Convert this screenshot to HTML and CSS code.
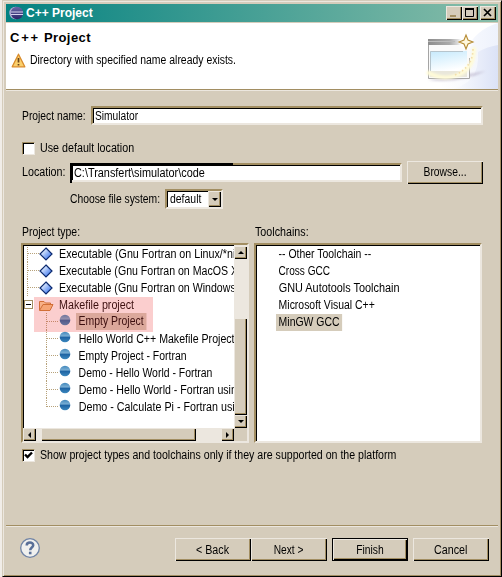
FILE: index.html
```
<!DOCTYPE html>
<html lang="en">
<head>
<meta charset="utf-8">
<title>C++ Project</title>
<link rel="stylesheet" href="styles.css">
</head>
<body>
<svg width="0" height="0" class="defs">
  <defs>
    <linearGradient id="ball" x1="0" y1="0" x2="0" y2="1"><stop offset="0" stop-color="#4187bb"/><stop offset=".42" stop-color="#7cb0d5"/><stop offset=".5" stop-color="#1d62a2"/><stop offset="1" stop-color="#3c88be"/></linearGradient>
    <linearGradient id="gem" x1="0" y1="0" x2="1" y2="1"><stop offset=".2" stop-color="#e8f2ff"/><stop offset=".85" stop-color="#3f78ee"/></linearGradient>
    <linearGradient id="ecl" x1="0" y1="0" x2="0" y2="1"><stop offset="0" stop-color="#6a68a8"/><stop offset="1" stop-color="#2a2468"/></linearGradient>
    <symbol id="dot" viewBox="0 0 12 12"><circle cx="6" cy="6" r="5.3" fill="url(#ball)"/></symbol>
    <symbol id="diamond" viewBox="0 0 14 14"><path d="M7 1 13 7 7 13 1 7Z" fill="url(#gem)" stroke="#0c2a70" stroke-width="1.2"/></symbol>
  </defs>
</svg>
<div class="window">
  <div class="titlebar">
    <svg class="eclipse" width="15" height="14" viewBox="0 0 15 14"><circle cx="6.500" cy="7" r="6.200" fill="#b5aed8"/><circle cx="8" cy="7" r="6.200" fill="url(#ecl)"/><path d="M2 6H14M2 8.500H14" stroke="#d5d2ee" stroke-width="1.200"/></svg>
    <span class="title">C++ Project</span>
    <div class="controls">
      <span class="ctl"><svg width="16" height="14"><path d="M4 10h6" stroke="#a28e62" stroke-width="2"/></svg></span>
      <span class="ctl"><svg width="16" height="14"><path d="M3.500 2v8.500h8V2" fill="none" stroke="#000"/><path d="M3 3h9" stroke="#000" stroke-width="2"/></svg></span>
      <span class="ctl close"><svg width="16" height="14"><path d="M4 3l7 7M11 3l-7 7" stroke="#000" stroke-width="1.700"/></svg></span>
    </div>
  </div>
  <header class="banner">
    <div class="heading">
      <h1><span class="wide">C++</span> Project</h1>
      <p><svg width="15" height="15" viewBox="0 0 15 15"><path d="M7.500 1.200 13.800 13.800H1.200Z" fill="#fbcf6b" stroke="#d98b2b" stroke-width="1.300" stroke-linejoin="round"/><path d="M7.500 5v4.500M7.500 11v1.600" stroke="#68421c" stroke-width="1.700"/></svg><span class="t s87">Directory with specified name already exists.</span></p>
    </div>
    <svg class="art" width="80" height="66" viewBox="418 23 80 66">
      <defs>
        <linearGradient id="sky" x1="0" y1="0" x2=".3" y2="1"><stop offset="0" stop-color="#c5e9fc"/><stop offset="1" stop-color="#fff"/></linearGradient>
        <linearGradient id="bar"><stop offset="0" stop-color="#8d8d8d"/><stop offset=".65" stop-color="#aaa"/><stop offset="1" stop-color="#eee"/></linearGradient>
        <linearGradient id="haze"><stop offset="0" stop-color="#fff"/><stop offset="1" stop-color="#dbe2f6"/></linearGradient>
        <linearGradient id="haze2"><stop offset="0" stop-color="#fff"/><stop offset="1" stop-color="#eef2fc"/></linearGradient>
        <filter id="soft" x="-30%" y="-30%" width="160%" height="160%"><feGaussianBlur stdDeviation="1.300"/></filter>
      </defs>
      <path d="M440 89Q450 60 465 50 477 29 498 23V89Z" fill="url(#haze2)"/>
      <path d="M448 89Q480 86 478 52 486 47 498 45V89Z" fill="url(#haze)"/>
      <path d="M428 80Q460 84 486 71L468 74Z" fill="#b0a8c2" opacity=".55" filter="url(#soft)"/>
      <path d="M428 39H470V79H428Z" fill="#fafafa"/>
      <path d="M428 39H461V45H428Z" fill="url(#bar)"/><path d="M428 41.500H455" stroke="#bbb"/>
      <path d="M428.500 45V78.500H469.500V58" fill="none" stroke="#a5a5a5"/>
      <path d="M430 51H467V72H430Z" fill="url(#sky)"/><path d="M430.500 72V51.500H463" fill="none" stroke="#b6c4cc"/>
      <path d="M430 71H467V77H430Z" fill="#e9e7db"/>
      <circle cx="466" cy="42" r="7" fill="#fff" opacity=".8" filter="url(#soft)"/>
      <path d="M427 72Q442 81 458 75 475 68 474 47" fill="none" stroke="#fffbd8" stroke-width="4" filter="url(#soft)"/>
      <path d="M455 75Q473 67 473 49" fill="none" stroke="#f3dfab" stroke-width="1.600" stroke-dasharray="1.500 2.500"/>
      <path d="M466 35 468 40 473 42 468 44 466 49 464 44 459 42 464 40Z" fill="#fff8dc" stroke="#b58b34" stroke-width="1.100"/>
    </svg>
  </header>
  <main>
    <div class="row name"><label><span class="t s86">Project name:</span></label><div class="field"><span class="t s85">Simulator</span></div></div>
    <div class="row usedef"><span class="check"></span><span class="t s89">Use default location</span></div>
    <div class="row loc"><label><span class="t s89">Location:</span></label><div class="field"><span class="t s91">C:\Transfert\simulator\code</span></div><button class="btn browse"><span class="t s86">Browse...</span></button></div>
    <div class="row fs"><label><span class="t s86">Choose file system:</span></label><div class="combo"><span class="t s87">default</span><span class="sbtn"><i class="arr down"></i></span></div></div>
    <div class="lists">
      <section>
        <h2><span class="t s87">Project type:</span></h2>
        <div class="pane left">
          <div class="tree">
            <ul>
              <li class="a"><svg><use href="#diamond"/></svg><span class="t s89">Executable (Gnu Fortran on Linux/*nix)</span></li>
              <li class="a"><svg><use href="#diamond"/></svg><span class="t s88">Executable (Gnu Fortran on MacOS X)</span></li>
              <li class="a"><svg><use href="#diamond"/></svg><span class="t s88">Executable (Gnu Fortran on Windows)</span></li>
              <li class="f"><i class="minus"></i><svg viewBox="0 0 16 14"><path d="M1.500 12V3.500H6L7.500 5H12.500V7" fill="#fbd9a0" stroke="#c77f35"/><path d="M1.500 12.500 5 6.500H15L12 12.500Z" fill="#f8c888" stroke="#c77f35"/></svg><span class="t s89">Makefile project</span></li>
              <li class="b"><svg><use href="#dot"/></svg><span class="t s87 sel">Empty Project</span></li>
              <li class="b"><svg><use href="#dot"/></svg><span class="t s88">Hello World C++ Makefile Project</span></li>
              <li class="b"><svg><use href="#dot"/></svg><span class="t s87">Empty Project - Fortran</span></li>
              <li class="b"><svg><use href="#dot"/></svg><span class="t s87">Demo - Hello World - Fortran</span></li>
              <li class="b"><svg><use href="#dot"/></svg><span class="t s88">Demo - Hello World - Fortran using</span></li>
              <li class="b last"><svg><use href="#dot"/></svg><span class="t s89">Demo - Calculate Pi - Fortran using</span></li>
            </ul>
            <div class="mark"></div>
          </div>
          <div class="vbar"><span class="sbtn"><i class="arr up"></i></span><span class="vgap"></span><span class="sbtn thumb"></span><span class="sbtn"><i class="arr down"></i></span></div>
          <div class="hbar"><span class="sbtn"><i class="arr lt"></i></span><span class="hgap"></span><span class="sbtn hthumb"></span><span class="hgap2"></span><span class="sbtn"><i class="arr rt"></i></span></div>
        </div>
      </section>
      <section>
        <h2><span class="t s89">Toolchains:</span></h2>
        <div class="pane right">
          <div class="tool"><span class="t s87">-- Other Toolchain --</span></div>
          <div class="tool"><span class="t s84">Cross GCC</span></div>
          <div class="tool"><span class="t s91">GNU Autotools Toolchain</span></div>
          <div class="tool"><span class="t s87">Microsoft Visual C++</span></div>
          <div class="tool"><span class="t s87 sel">MinGW GCC</span></div>
        </div>
      </section>
    </div>
    <div class="row show"><span class="check"><svg width="9" height="9" viewBox="0 0 9 9"><path d="M1 3.500 3.500 6 8 1.500" fill="none" stroke="#000" stroke-width="2.400"/></svg></span><span class="t s88">Show project types and toolchains only if they are supported on the platform</span></div>
  </main>
  <footer>
    <svg class="help" width="20" height="20" viewBox="0 0 20 20"><circle cx="10" cy="10" r="9.300" fill="#f0f0ee" stroke="#6f83a5" stroke-width="1.300"/><path d="M6.700 7.500C6.700 3.600 13.400 3.700 13.200 7.300 13 9.600 10.300 9.400 10.200 12.200" fill="none" stroke="#596f98" stroke-width="2.500"/><path d="M8.900 13.700h2.600v2.600H8.900Z" fill="#596f98"/></svg>
    <button class="btn"><span class="t mid s89">&lt; Back</span></button>
    <button class="btn"><span class="t mid s85">Next &gt;</span></button>
    <button class="btn default"><span class="t mid s86">Finish</span></button>
    <button class="btn"><span class="t mid s89">Cancel</span></button>
  </footer>
</div>
</body>
</html>
```
FILE: styles.css
```
* { box-sizing: border-box; margin: 0; padding: 0; }
body { background: #f1ede8; font: 12px/16px "Liberation Sans", Arial, sans-serif; color: #000; overflow: hidden; }
.defs { position: absolute; }
span, label { white-space: nowrap; }
/* condensed lettering of the classic system font */
.t { display: inline-block; transform-origin: 0 50%; flex: none; }
.s84 { transform: scaleX(.84); }
.s85 { transform: scaleX(.85); }
.s86 { transform: scaleX(.86); }
.s87 { transform: scaleX(.87); }
.s88 { transform: scaleX(.883); }
.s89 { transform: scaleX(.893); }
.s91 { transform: scaleX(.907); }
.mid, .browse .t { transform-origin: 50% 50%; }
.window { width: 500px; height: 577px; margin-left: 2px; background: #d5ccbb; border: 1px solid #d5ccbb; border-right-color: #000; border-bottom-color: #000; box-shadow: inset 1px 1px #ece7df, inset -1px -1px #a28e62; padding: 3px; display: flex; flex-direction: column; }
.titlebar { height: 18px; flex: none; background: linear-gradient(90deg, #048281, #88bda9); display: flex; align-items: center; padding: 0 2px 0 3px; }
.title { color: #fff; font-weight: bold; font-size: 12px; margin-left: 2px; flex: 1; }
.controls { display: flex; }
.ctl { width: 16px; height: 14px; background: #d5ccbb; box-shadow: inset 1px 1px #ece7df, inset -1px -1px #000, inset -2px -2px #a28e62; display: block; }
.ctl svg { display: block; }
.close { margin-left: 2px; }
.banner { margin-top: 1px; height: 67px; flex: none; background: #fff; border-bottom: 1px solid #a28e62; box-shadow: 0 1px #ece7df; display: flex; justify-content: space-between; }
.heading { padding: 6px 0 0 4px; }
h1 { font-size: 13px; line-height: 18px; letter-spacing: .4px; }
.wide { letter-spacing: 1.8px; }
.heading p { display: flex; margin-top: 5px; align-items: center; width: 300px; }
.heading p svg { margin: 0 4px 0 1px; }
main { padding: 16px 0 0 16px; flex: 1; }
.row { display: flex; align-items: center; }
.field { border: 2px solid; border-color: #a28e62 #ece7df #ece7df #a28e62; box-shadow: inset 1px 1px #000; background: #fff; height: 19px; line-height: 15px; padding-left: 1.5px; }
.field .t { line-height: 16px; }
.name { height: 19px; }
.name label { width: 69px; }
.name .field { width: 392px; }
.usedef { margin-top: 16px; height: 14px; }
.check { width: 13px; height: 13px; background: #fff; border: 1px solid; border-color: #a28e62 #ece7df #ece7df #a28e62; box-shadow: inset 1px 1px #000; margin-right: 5px; display: block; flex: none; }
.check svg { display: block; margin: 1px; }
.loc { margin-top: 5px; height: 24px; }
.loc label { width: 48px; }
.loc .field { width: 332px; margin-right: 5px; position: relative; }
.loc .field::before { content: ""; position: absolute; left: -2px; top: -2px; width: 161px; height: 18px; border: 2px solid #000; border-width: 2px 0 0 2px; }
.btn { background: #d5ccbb; border: 0; box-shadow: inset 1px 1px #ece7df, inset -1px -1px #000, inset -2px -2px #a28e62; width: 76px; height: 23px; font: inherit; text-align: center; }
.fs { height: 20px; margin-top: 5px; padding-left: 48px; }
.fs label { width: 95px; flex: none; }
.combo { width: 58px; height: 20px; border: 2px solid; border-color: #a28e62 #ece7df #ece7df #a28e62; box-shadow: inset 1px 1px #000; background: #fff; display: flex; justify-content: space-between; padding-left: 3px; }
.combo .t { width: 36px; }
.sbtn { background: #d5ccbb; box-shadow: inset 1px 1px #ece7df, inset -1px -1px #000, inset -2px -2px #a28e62; width: 13px; height: 13px; display: flex; align-items: center; justify-content: center; flex: none; }
.combo .sbtn { height: 16px; }
.arr { border: 3px solid transparent; display: block; }
.down { border-bottom: 0; border-top-color: #000; }
.up { border-top: 0; border-bottom-color: #000; }
.lt { border-left: 0; border-right-color: #000; }
.rt { border-right: 0; border-left-color: #000; }
.lists { display: grid; grid-template-columns: 228px 228px; gap: 5px; margin: 14px 0 0 -1px; }
h2 { font-size: 12px; font-weight: normal; height: 20px; line-height: 18px; padding-left: 1px; }
.pane { height: 200px; background: #fff; border: 2px solid; border-color: #a28e62 #ece7df #ece7df #a28e62; box-shadow: inset 1px 1px #000; overflow: hidden; }
.left { display: grid; grid-template: 183px 13px / 211px 13px; background: #d5ccbb; }
.tree { background: #fff; overflow: hidden; position: relative; border: 1px solid #000; border-width: 1px 0 0 1px; }
.tree ul { list-style: none; margin-top: -1px; }
.tree li { display: flex; align-items: center; height: 17px; }
.tree li svg { flex: none; width: 14px; height: 14px; }
.a { padding-left: 15px; background: repeating-linear-gradient(#b7a27a 0 1px, #fff 1px 2px) 3px 0 / 1px 100% no-repeat, repeating-linear-gradient(90deg, #b7a27a 0 1px, #fff 1px 2px) 4px 8px / 11px 1px no-repeat; }
.a span { margin-left: 6px; }
.f .minus { width: 9px; height: 9px; flex: none; border: 1px solid #a28e62; background: linear-gradient(#000, #000) center / 5px 1px no-repeat; margin-right: 5px; }
.tree .f svg { width: 16px; margin-right: 5px; }
.b { padding-left: 35px; background: repeating-linear-gradient(#b7a27a 0 1px, #fff 1px 2px) 22px 0 / 1px 100% no-repeat, repeating-linear-gradient(90deg, #b7a27a 0 1px, #fff 1px 2px) 23px 8px / 11px 1px no-repeat; }
.last { background-size: 1px 9px, 11px 1px; }
.tree .b svg { width: 12px; height: 12px; margin-top: -3px; }
.b span { margin-left: 5px; padding: 0 3px; }
.b .sel { line-height: 17px; }
.sel { background: #d5ccbb; }
.mark { position: absolute; left: 10px; top: 51px; width: 119px; height: 35px; background: rgba(239,60,60,.25); }
.vbar { display: flex; flex-direction: column; background: #ece7df; padding-top: 1px; }
.vgap { height: 59px; }
.thumb { flex: 1; }
.hbar { display: flex; background: #ece7df; width: 211px; }
.hgap { width: 5px; }
.hthumb { width: 155px; }
.hgap2 { flex: 1; }
.right { padding: 1px 0 0 20px; }
.tool { height: 17px; }
.tool span { padding: 0 3px; height: 17px; line-height: 17px; }
.show { margin-top: 4px; height: 16px; }
footer { height: 48px; border-top: 1px solid #a28e62; box-shadow: inset 0 1px #ece7df; display: flex; align-items: flex-start; padding: 12px 0 0 14px; }
.help { margin-right: 135px; flex: none; }
footer .btn + .default, footer .default + .btn { margin-left: 5px; }
.default { border: 1px solid #000; }
```
